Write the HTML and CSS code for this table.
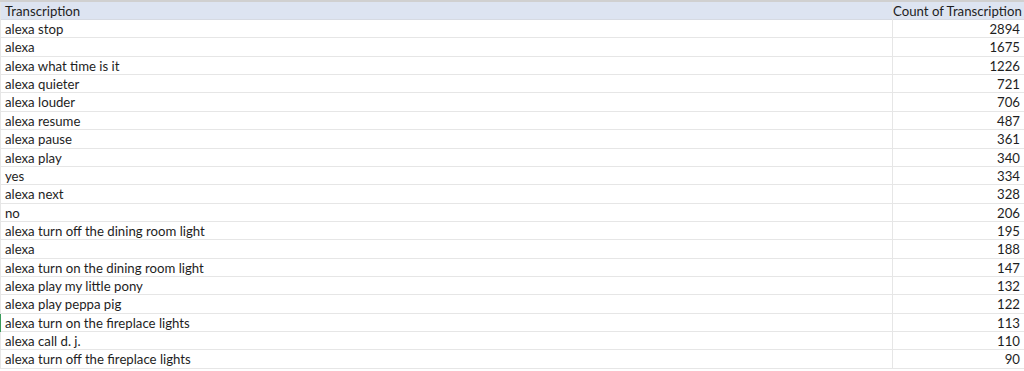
FILE: index.html
```html
<!DOCTYPE html>
<html>
<head>
<meta charset="utf-8">
<link rel="stylesheet" href="styles.css">
</head>
<body>
<div class="sheet">
  <div class="row head"><div class="c1">Transcription</div><div class="c2">Count of Transcription</div></div>
  <div class="row"><div class="c1">alexa stop</div><div class="c2">2894</div></div>
  <div class="row"><div class="c1">alexa</div><div class="c2">1675</div></div>
  <div class="row"><div class="c1">alexa what time is it</div><div class="c2">1226</div></div>
  <div class="row"><div class="c1">alexa quieter</div><div class="c2">721</div></div>
  <div class="row"><div class="c1">alexa louder</div><div class="c2">706</div></div>
  <div class="row"><div class="c1">alexa resume</div><div class="c2">487</div></div>
  <div class="row"><div class="c1">alexa pause</div><div class="c2">361</div></div>
  <div class="row"><div class="c1">alexa play</div><div class="c2">340</div></div>
  <div class="row"><div class="c1">yes</div><div class="c2">334</div></div>
  <div class="row"><div class="c1">alexa next</div><div class="c2">328</div></div>
  <div class="row"><div class="c1">no</div><div class="c2">206</div></div>
  <div class="row"><div class="c1">alexa turn off the dining room light</div><div class="c2">195</div></div>
  <div class="row"><div class="c1">alexa</div><div class="c2">188</div></div>
  <div class="row"><div class="c1">alexa turn on the dining room light</div><div class="c2">147</div></div>
  <div class="row"><div class="c1">alexa play my little pony</div><div class="c2">132</div></div>
  <div class="row"><div class="c1">alexa play peppa pig</div><div class="c2">122</div></div>
  <div class="row sel"><div class="c1">alexa turn on the fireplace lights</div><div class="c2">113</div></div>
  <div class="row"><div class="c1">alexa call d. j.</div><div class="c2">110</div></div>
  <div class="row"><div class="c1">alexa turn off the fireplace lights</div><div class="c2">90</div></div>
</div>
</body>
</html>
```
FILE: styles.css
```css
html, body {
  margin: 0;
  padding: 0;
  background: #ffffff;
}
.sheet {
  width: 1024px;
  border-top: 2px solid #d0d0d0;
  font-family: Lato, "Liberation Sans", sans-serif;
  font-size: 13.2px;
  color: #1e1e1e;
}
.row {
  display: grid;
  grid-template-columns: 892px 132px;
  height: 18.37px;
  box-sizing: border-box;
  border-bottom: 1px solid #e6e6e6;
  line-height: 18px;
}
.row.head {
  height: 18px;
  background: #dde4f1;
  border-bottom: 1px solid #d6dae2;
}
.c1 {
  padding-left: 4px;
  border-left: 1px solid #e6e6e6;
  white-space: nowrap;
  overflow: hidden;
}
.c2 {
  text-align: right;
  padding-right: 4px;
  border-left: 1px solid #e6e6e6;
  white-space: nowrap;
}
.row.sel .c1 {
  border-left-color: #3a9b5a;
}
```
